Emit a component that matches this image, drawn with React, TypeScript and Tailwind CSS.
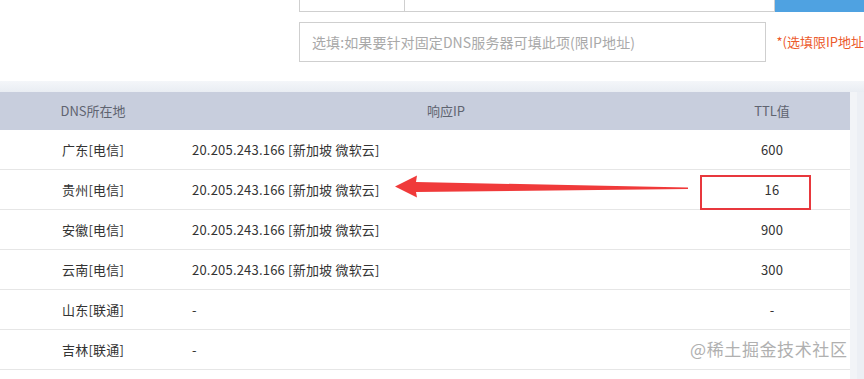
import React from 'react'

type Row = { area: string; ip: string; ttl: string }

const rows: Row[] = [
  { area: '广东[电信]', ip: '20.205.243.166 [新加坡 微软云]', ttl: '600' },
  { area: '贵州[电信]', ip: '20.205.243.166 [新加坡 微软云]', ttl: '16' },
  { area: '安徽[电信]', ip: '20.205.243.166 [新加坡 微软云]', ttl: '900' },
  { area: '云南[电信]', ip: '20.205.243.166 [新加坡 微软云]', ttl: '300' },
  { area: '山东[联通]', ip: '-', ttl: '-' },
  { area: '吉林[联通]', ip: '-', ttl: '' },
  { area: '', ip: '', ttl: '' },
]

const font = { fontFamily: '"Noto Sans CJK SC", "Microsoft YaHei", sans-serif' }

function QueryForm() {
  return (
    <div className="flex h-[81px] flex-col bg-white pl-[299px]">
      {/* domain input row, scrolled mostly out of view */}
      <div className="-mt-[29px] flex h-[41px] shrink-0">
        <div className="w-[105px] border border-r-0 border-[#cfcfcf]" />
        <div className="w-[371px] border border-[#cfcfcf]" />
        <button className="flex-1 bg-[#4fa2e1]" />
      </div>
      <div className="mt-[10px] flex items-center">
        <div className="flex h-[40px] w-[468px] items-center border border-[#cfcfcf] px-[12px] text-[14px] tracking-[0.1px] text-[#a9a9a9]">
          选填:如果要针对固定DNS服务器可填此项(限IP地址)
        </div>
        <span className="ml-[10px] whitespace-nowrap text-[13px] text-[#ec5a2c]">*(选填限IP地址</span>
      </div>
    </div>
  )
}

function ResultTable() {
  return (
    <div className="flex">
      <div className="w-[850px]">
        <div className="grid h-[38px] grid-cols-[186px_508px_156px] items-center bg-[#c8cedd] text-[13px] text-[#5f6470]">
          <div className="text-center">DNS所在地</div>
          <div className="pl-[12px] text-center">响应IP</div>
          <div className="text-center">TTL值</div>
        </div>
        {rows.map((r, i) => (
          <div
            key={i}
            className="grid h-[40px] grid-cols-[186px_508px_156px] items-center border-b border-[#e6e6e6] text-[13px] tracking-[0.2px] text-[#333]"
          >
            <div className="text-center">{r.area}</div>
            <div className="pl-[6px]">{r.ip}</div>
            <div className="text-center">{r.ttl}</div>
          </div>
        ))}
      </div>
      <div className="w-[7px] bg-[#f2f4f7]" />
      <div className="flex-1 bg-[#eceff4]" />
    </div>
  )
}

function Annotation() {
  return (
    <>
      <svg className="pointer-events-none absolute left-0 top-0" width="864" height="379">
        <polygon
          points="395,186.5 417,175.5 416,182 688,187.5 688,189 416,192 417,197.5"
          fill="#f03a3a"
        />
      </svg>
      <div className="pointer-events-none absolute left-[700px] top-[175px] h-[35px] w-[111px] border-2 border-[#e8383d]" />
    </>
  )
}

export default function App() {
  return (
    <div className="relative h-[379px] w-[864px] overflow-hidden bg-white" style={font}>
      <QueryForm />
      <div className="h-[11px] bg-gradient-to-b from-[#f4f6f9] to-[#e9edf3]" />
      <ResultTable />
      <Annotation />
      <div className="pointer-events-none absolute left-[690px] top-[336px] text-[17px] tracking-[0.6px] text-[#b0b0b0]">
        @稀土掘金技术社区
      </div>
    </div>
  )
}
